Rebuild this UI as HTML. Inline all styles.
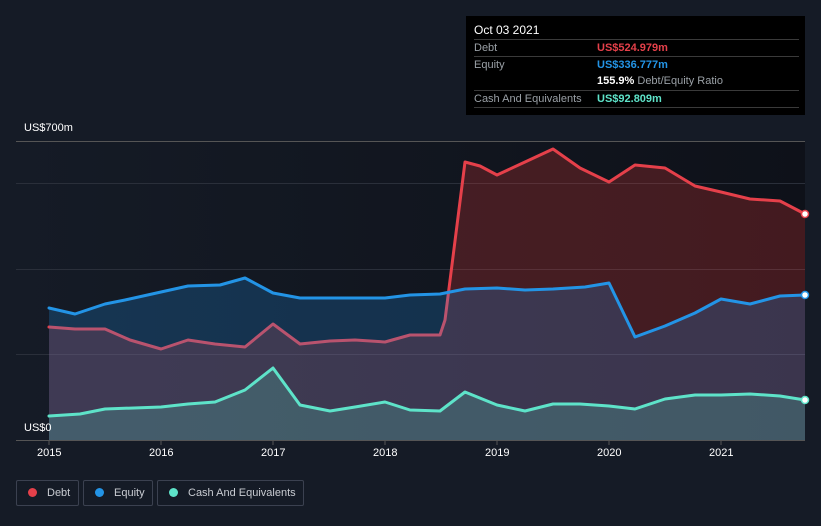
<!DOCTYPE html>
<html><head><meta charset="utf-8"><style>
html,body{margin:0;width:821px;height:526px;overflow:hidden}
body{background:#151b26;font-family:"Liberation Sans",sans-serif;position:relative}
.tt{position:absolute;left:466px;top:16px;width:339px;height:99px;background:#000;color:#fff;font-size:11px}
.tt .r{position:absolute;left:8px;right:6px;border-top:1px solid #3a3a3a;height:17px;line-height:17px;color:#9aa0a6}
.tt .v{position:absolute;left:123px;font-weight:bold}
.lg{position:absolute;top:480px;height:26px;border:1px solid #3b4150;border-radius:2px;color:#c9ccd2;font-size:11px;line-height:24px;box-sizing:border-box;white-space:nowrap}
.lg i{display:inline-block;width:9px;height:9px;border-radius:50%;margin:0 10px 0 11px;vertical-align:-1px}
.ax{position:absolute;color:#fff;font-size:11px}
</style></head><body>
<svg width="821" height="526" style="position:absolute;left:0;top:0">
<defs><linearGradient id="bg" x1="0" x2="1"><stop offset="0" stop-color="#151b26"/><stop offset="1" stop-color="#0e1119"/></linearGradient></defs>
<rect x="16" y="141" width="789" height="299" fill="url(#bg)"/>
<g stroke="#2a2f3a" stroke-width="1"><line x1="16" x2="805" y1="141.5" y2="141.5" stroke="#555"/><line x1="16" x2="805" y1="183.5" y2="183.5"/><line x1="16" x2="805" y1="269.5" y2="269.5"/><line x1="16" x2="805" y1="354.5" y2="354.5"/></g>
<polygon fill="rgba(229,57,53,0.25)" points="49,440 49,327 75,329 105,329 130,340 161,349 188,340 215,344 245,347 273,324 300,344 330,341 355,340 385,342 410,335 440,335 445,320 465,162 480,166 497,175 525,162 553,149 580,168 609,182 635,165 665,168 695,186 721,192 750,199 780,201 805,214 805,440"/>
<g fill="none" stroke-width="3" stroke-linejoin="round" stroke-linecap="round">
<polyline stroke="#e5404a" points="49,327 75,329 105,329 130,340 161,349 188,340 215,344 245,347 273,324 300,344 330,341 355,340 385,342 410,335 440,335 445,320 465,162 480,166 497,175 525,162 553,149 580,168 609,182 635,165 665,168 695,186 721,192 750,199 780,201 805,214"/>
</g>
<polygon fill="rgba(33,150,243,0.22)" points="49,440 49,308 75,314 105,304 125,300 161,292 188,286 220,285 245,278 273,293 300,298 330,298 355,298 385,298 410,295 440,294 465,289 497,288 525,290 553,289 585,287 609,283 635,337 665,326 695,313 721,299 750,304 780,296 805,295 805,440"/>
<polygon fill="rgba(88,230,200,0.2)" points="49,440 49,416 80,414 105,409 161,407 188,404 215,402 245,390 273,368 300,405 330,411 355,407 385,402 410,410 440,411 465,392 497,405 525,411 553,404 580,404 609,406 635,409 665,399 695,395 721,395 750,394 780,396 805,400 805,440"/>
<g fill="none" stroke-width="3" stroke-linejoin="round" stroke-linecap="round">
<polyline stroke="#2394e6" points="49,308 75,314 105,304 125,300 161,292 188,286 220,285 245,278 273,293 300,298 330,298 355,298 385,298 410,295 440,294 465,289 497,288 525,290 553,289 585,287 609,283 635,337 665,326 695,313 721,299 750,304 780,296 805,295"/>
<polyline stroke="#5ee3c9" points="49,416 80,414 105,409 161,407 188,404 215,402 245,390 273,368 300,405 330,411 355,407 385,402 410,410 440,411 465,392 497,405 525,411 553,404 580,404 609,406 635,409 665,399 695,395 721,395 750,394 780,396 805,400"/>
</g>
<circle cx="805" cy="214" r="3.5" fill="#fff" stroke="#e5404a" stroke-width="1.5"/>
<circle cx="805" cy="295" r="3.5" fill="#fff" stroke="#2394e6" stroke-width="1.5"/>
<circle cx="805" cy="400" r="3.5" fill="#fff" stroke="#5ee3c9" stroke-width="1.5"/>
<line x1="16" x2="805" y1="440.5" y2="440.5" stroke="#555"/>
<g stroke="#555"><line x1="49" x2="49" y1="440" y2="445"/><line x1="161" x2="161" y1="440" y2="445"/><line x1="273" x2="273" y1="440" y2="445"/><line x1="385" x2="385" y1="440" y2="445"/><line x1="497" x2="497" y1="440" y2="445"/><line x1="609" x2="609" y1="440" y2="445"/><line x1="721" x2="721" y1="440" y2="445"/></g>
</svg>
<div class="ax" style="left:24px;top:122px">US$700m</div>
<div class="ax" style="left:24px;top:422px">US$0</div>
<div class="ax" style="left:37px;top:447px">2015</div>
<div class="ax" style="left:149px;top:447px">2016</div>
<div class="ax" style="left:261px;top:447px">2017</div>
<div class="ax" style="left:373px;top:447px">2018</div>
<div class="ax" style="left:485px;top:447px">2019</div>
<div class="ax" style="left:597px;top:447px">2020</div>
<div class="ax" style="left:709px;top:447px">2021</div>
<div class="tt">
<div style="position:absolute;left:8px;top:7px;font-size:12px">Oct 03 2021</div>
<div class="r" style="top:23px">Debt<span class="v" style="color:#e5404a">US$524.979m</span></div>
<div class="r" style="top:40px">Equity<span class="v" style="color:#2394e6">US$336.777m</span></div>
<div class="r" style="top:57px;border-top:none"><span class="v" style="color:#fff">155.9% <span style="color:#9aa0a6;font-weight:normal">Debt/Equity Ratio</span></span></div>
<div class="r" style="top:74px">Cash And Equivalents<span class="v" style="color:#5ee3c9">US$92.809m</span></div>
<div style="position:absolute;left:8px;right:6px;top:91px;border-top:1px solid #3a3a3a"></div>
</div>
<div class="lg" style="left:16px;width:63px"><i style="background:#e5404a"></i>Debt</div>
<div class="lg" style="left:83px;width:70px"><i style="background:#2394e6"></i>Equity</div>
<div class="lg" style="left:157px;width:147px"><i style="background:#5ee3c9"></i>Cash And Equivalents</div>
</body></html>
